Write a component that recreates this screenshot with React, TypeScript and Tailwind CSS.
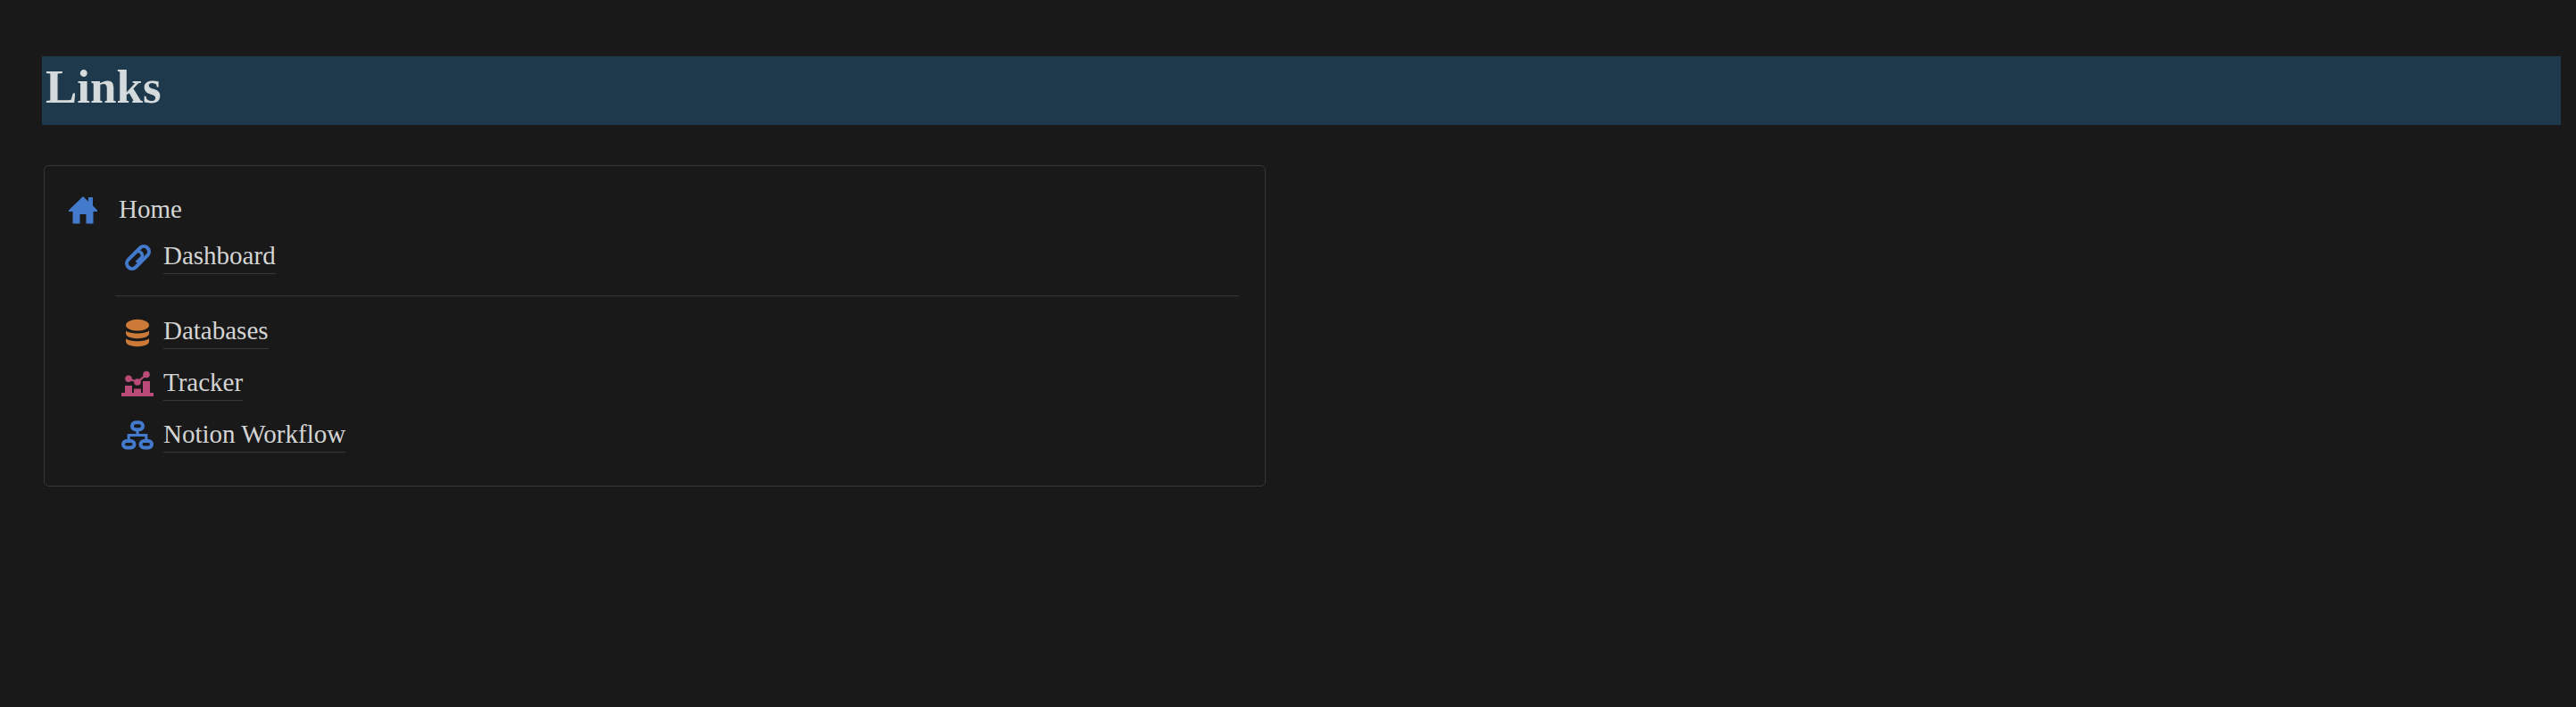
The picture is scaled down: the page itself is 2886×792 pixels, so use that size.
import React from "react";

type IconProps = { className?: string };

function HomeIcon() {
  return (
    <svg viewBox="0 0 32 31" className="mt-1 h-[31px] w-8 shrink-0 fill-[#447acb]" aria-hidden="true">
      <path d="M16 0 L22 5.800 V1 H27 V10.500 L32 15.500 V17 H27.500 V30.500 H19.500 V20 H12.500 V30.500 H4.500 V17 H0 V15.500 Z" />
    </svg>
  );
}

function ClipIcon({ className }: IconProps) {
  return (
    <svg viewBox="0 0 36 36" className={className} fill="none" stroke="#447acb" strokeWidth="4" aria-hidden="true">
      <g transform="translate(18.500 17.500) rotate(45)">
        <rect x="-5.900" y="-15.200" width="11.800" height="30.400" rx="5.900" />
        <path d="M-6.200 -3 C-4.500 -7.500 2.800 -7.500 2.800 -2.500 V5" strokeWidth="3.400" />
      </g>
    </svg>
  );
}

function DatabaseIcon({ className }: IconProps) {
  return (
    <svg viewBox="0 0 36 36" className={className} fill="#cb7b37" aria-hidden="true">
      <ellipse cx="18" cy="9.200" rx="13" ry="6.400" />
      <path d="M5 15.500 C9 19.500 27 19.500 31 15.500 V18.500 C31 26 5 26 5 18.500 Z" />
      <path d="M5 24.300 C9 28.300 27 28.300 31 24.300 V27.500 C31 35 5 35 5 27.500 Z" />
    </svg>
  );
}

function ChartIcon({ className }: IconProps) {
  return (
    <svg viewBox="0 0 36 36" className={className} fill="#ba4a78" aria-hidden="true">
      <path d="M0 31 V27 H4 V19 H12 V27 H14 V22.500 H22 V27 H24 V14 H32 V27 H36 V31 Z" />
      <circle cx="8" cy="11.300" r="3.800" />
      <circle cx="18" cy="15" r="3.800" />
      <circle cx="28" cy="6.500" r="3.800" />
      <path d="M8 11.300 L18 15 L28 6.500" fill="none" stroke="#ba4a78" strokeWidth="2.200" />
    </svg>
  );
}

function WorkflowIcon({ className }: IconProps) {
  return (
    <svg viewBox="0 0 36 36" className={className} fill="none" stroke="#447acb" strokeWidth="4" aria-hidden="true">
      <rect x="12" y="2.200" width="12" height="8" rx="4" />
      <rect x="2" y="23" width="12.500" height="7.500" rx="3.750" />
      <rect x="21.500" y="23" width="12.500" height="7.500" rx="3.750" />
      <path d="M18 11 V16.500 M8.200 23 V16.500 H27.800 V23" strokeWidth="3.200" />
    </svg>
  );
}

function PageLink({ icon: Icon, label }: { icon: React.ComponentType<IconProps>; label: string }) {
  return (
    <li className="flex h-[58px] items-center">
      <a href="#" className="flex items-center gap-[11px]">
        <Icon className="mt-1 size-9 shrink-0" />
        <span className="border-b border-[#373737] pb-[2px] leading-9">{label}</span>
      </a>
    </li>
  );
}

export default function App() {
  return (
    <main className="min-h-screen bg-[#191919] pt-[63px] pr-[17px] pl-[47px] font-['Liberation_Serif',serif] text-[29px] text-[#d4d4d4]">
      <h1 className="bg-[#1f394c] px-1 pt-1 pb-[13px] text-[53px] leading-[60px] font-bold text-[#d5dadc]">Links</h1>
      <section className="mt-[45px] ml-[2px] w-[48.5%] rounded-md border border-[#373737] pt-[30px] pr-[29px] pb-7 pl-[27px]">
        <div className="flex items-start gap-5">
          <HomeIcon />
          <div className="min-w-0 flex-1">
            <p className="pl-1 leading-9">Home</p>
            <nav aria-label="Home pages">
              <ul className="mt-[6px] pl-[7px]">
                <PageLink icon={ClipIcon} label="Dashboard" />
              </ul>
              <hr className="mt-[15px] mb-[10px] border-[#373737]" />
              <ul className="pl-[7px]">
                <PageLink icon={DatabaseIcon} label="Databases" />
                <PageLink icon={ChartIcon} label="Tracker" />
                <PageLink icon={WorkflowIcon} label="Notion Workflow" />
              </ul>
            </nav>
          </div>
        </div>
      </section>
    </main>
  );
}
